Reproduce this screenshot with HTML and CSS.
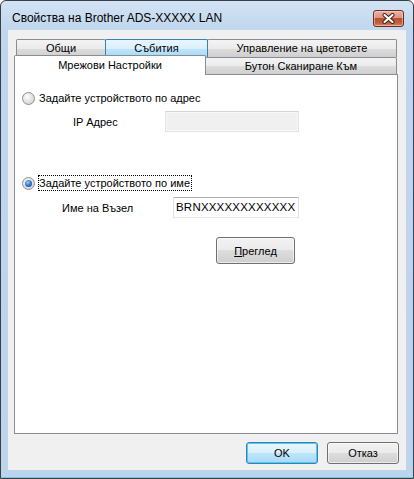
FILE: index.html
```html
<!DOCTYPE html>
<html lang="bg">
<head>
    <meta charset="UTF-8">
    <meta name="viewport" content="width=device-width, initial-scale=1.0">
    <title>Свойства на Brother ADS-XXXXX LAN</title>
    <link rel="stylesheet" href="styles.css">
</head>
<body>
    <div class="window">
        <div class="titlebar">
            <span class="title">Свойства на Brother ADS-XXXXX LAN</span>
            <button class="close-btn" type="button" aria-label="Затвори">
                <svg width="13" height="11" viewBox="0 0 13 11">
                    <path d="M2.5 2 L10.5 9 M10.5 2 L2.5 9" stroke="#3b1c14" stroke-width="4" stroke-linecap="round"/>
                    <path d="M2.5 2 L10.5 9 M10.5 2 L2.5 9" stroke="#fff" stroke-width="2.2" stroke-linecap="round"/>
                </svg>
            </button>
        </div>

        <div class="client">
            <!-- задни табове -->
            <div class="tab-row tab-row-back">
                <div class="tab tab-general">Общи</div>
                <div class="tab tab-events tab-hover">Събития</div>
                <div class="tab tab-colors">Управление на цветовете</div>
            </div>
            <!-- предни табове -->
            <div class="tab-row tab-row-front">
                <div class="tab tab-network tab-active">Мрежови Настройки</div>
                <div class="tab tab-scan">Бутон Сканиране Към</div>
            </div>

            <div class="panel">
                <div class="option">
                    <span class="radio"></span>
                    <span class="option-text">Задайте устройството по адрес</span>
                </div>
                <div class="field field-ip">
                    <span class="field-label">IP Адрес</span>
                    <span class="input input-disabled"></span>
                </div>

                <div class="option option-name">
                    <span class="radio radio-checked"></span>
                    <span class="option-text focus-rect">Задайте устройството по име</span>
                </div>
                <div class="field field-node">
                    <span class="field-label">Име на Възел</span>
                    <span class="input">BRNXXXXXXXXXXXX</span>
                </div>

                <div class="browse-row">
                    <button class="btn btn-browse" type="button"><u>П</u>реглед</button>
                </div>
            </div>

            <div class="footer">
                <button class="btn btn-default" type="button">OK</button>
                <button class="btn" type="button">Отказ</button>
            </div>
        </div>
    </div>
</body>
</html>
```

FILE: styles.css
```css
* {
    box-sizing: border-box;
    margin: 0;
    padding: 0;
}

body {
    width: 414px;
    height: 479px;
    background: #fff;
    font-family: "Liberation Sans", Arial, sans-serif;
    font-size: 11px;
    color: #000;
}

.window {
    width: 414px;
    height: 479px;
    border: 1px solid #3a3e46;
    border-radius: 6px 6px 0 0;
    background: linear-gradient(#d3e3f4, #bfd6ee 30px, #bcd4ec);
    box-shadow: inset 0 -1px 0 #74c5ea;
    padding: 0 7px 8px;
    display: flex;
    flex-direction: column;
}

/* заглавна лента */
.titlebar {
    height: 29px;
    display: flex;
    align-items: flex-start;
    padding-left: 4px;
}

.title {
    font-size: 12px;
    line-height: 15px;
    padding-top: 10px;
    color: #000;
}

.close-btn {
    margin-left: auto;
    margin-right: 2px;
    margin-top: 9px;
    width: 31px;
    height: 17px;
    border: 1px solid #6b2d1f;
    border-radius: 3px;
    background: linear-gradient(#eab1a3 0%, #dc9482 45%, #b9512f 50%, #c25d3b 80%, #d98a6c 100%);
    box-shadow: inset 0 0 0 1px rgba(255, 220, 210, 0.5);
    display: flex;
    align-items: center;
    justify-content: center;
}

.client {
    height: 440px;
    background: #f0f0f0;
}

/* табове */
.tab-row {
    display: flex;
    align-items: flex-start;
    padding-left: 8px;
}

.tab-row-back {
    margin-top: 9px;
    height: 18px;
}

.tab-row-front {
    height: 17px;
}

.tab {
    height: 100%;
    border: 1px solid #898c95;
    border-bottom: none;
    border-radius: 2px 2px 0 0;
    background: linear-gradient(#f3f3f3 0%, #ebebeb 50%, #dddddd 50%, #cfcfcf 100%);
    text-align: center;
    line-height: 15px;
    padding-top: 1px;
    white-space: nowrap;
}

.tab + .tab {
    margin-left: -1px;
}

.tab-general { width: 90px; }
.tab-events { width: 103px; }
.tab-colors { width: 190px; }
.tab-scan { width: 192px; }

.tab-hover {
    border-color: #3c7fb1;
    background: linear-gradient(#eaf6fd 0%, #d9f0fc 50%, #bee6fd 50%, #a7d9f5 100%);
    position: relative;
}

.tab-active {
    width: 192px;
    height: 20px;
    margin-left: -2px;
    margin-top: -2px;
    background: #fff;
    position: relative;
    z-index: 1;
    padding-top: 2px;
}

.panel {
    margin-left: 6px;
    width: 384px;
    height: 360px;
    border: 1px solid #898c95;
    background: #fff;
    padding: 15px 0 0 7px;
}

/* радио опции */
.option {
    display: flex;
    align-items: center;
    height: 16px;
}

.option-name {
    margin-top: 43px;
}

.radio {
    width: 13px;
    height: 13px;
    border-radius: 50%;
    border: 1px solid #8e8f8f;
    background: radial-gradient(circle at 40% 35%, #fdfdfd 0%, #e6e6e6 45%, #c9c9c9 100%);
    display: flex;
    align-items: center;
    justify-content: center;
}

.radio-checked::after {
    content: "";
    width: 7px;
    height: 7px;
    border-radius: 50%;
    background: radial-gradient(circle at 40% 35%, #8fd0fa 0%, #2a6fc4 55%, #0f3f84 100%);
}

.option-text {
    margin-left: 3px;
    border: 1px solid transparent;
    line-height: 14px;
    padding-right: 1px;
}

.focus-rect {
    border: 1px dotted #000;
}

/* полета */
.field {
    display: flex;
    align-items: center;
    height: 21px;
}

.field-ip {
    margin-top: 5px;
}

.field-node {
    margin-top: 6px;
}

.field-ip .field-label {
    margin-left: 51px;
    width: 92px;
}

.field-node .field-label {
    margin-left: 40px;
    width: 111px;
}

.input {
    display: block;
    height: 21px;
    border: 1px solid;
    border-color: #abadb3 #dbdfe6 #e3e9ef #e2e3ea;
    background: #fff;
    padding-left: 2px;
    line-height: 19px;
    font-size: 11.5px;
    letter-spacing: 0.2px;
    white-space: nowrap;
    overflow: hidden;
}

.field-ip .input {
    width: 134px;
}

.field-node .input {
    width: 126px;
}

.input-disabled {
    background: #f0f0f0;
    border-color: #d5d5d5 #e3e3e3 #e3e3e3 #e3e3e3;
    box-shadow: inset 0 0 0 1px #f7f7f7;
}

/* бутони */
.browse-row {
    margin-top: 19px;
}

.btn {
    width: 72px;
    height: 22px;
    border: 1px solid #707070;
    border-radius: 3px;
    background: linear-gradient(#f2f2f2 0%, #ebebeb 48%, #dddddd 50%, #cfcfcf 100%);
    box-shadow: inset 0 0 0 1px rgba(255, 255, 255, 0.6);
    font-family: inherit;
    font-size: 11px;
    color: #000;
}

.btn-browse {
    margin-left: 194px;
    width: 79px;
    height: 27px;
}

.btn-default {
    border-color: #3c7fb1;
    background: linear-gradient(#eaf6fd 0%, #d9f0fc 48%, #bee6fd 50%, #a7d9f5 100%);
    box-shadow: inset 0 0 0 1px #4ecbf3;
}

.footer {
    display: flex;
    justify-content: flex-end;
    gap: 9px;
    margin-top: 8px;
    padding-right: 7px;
}
```
